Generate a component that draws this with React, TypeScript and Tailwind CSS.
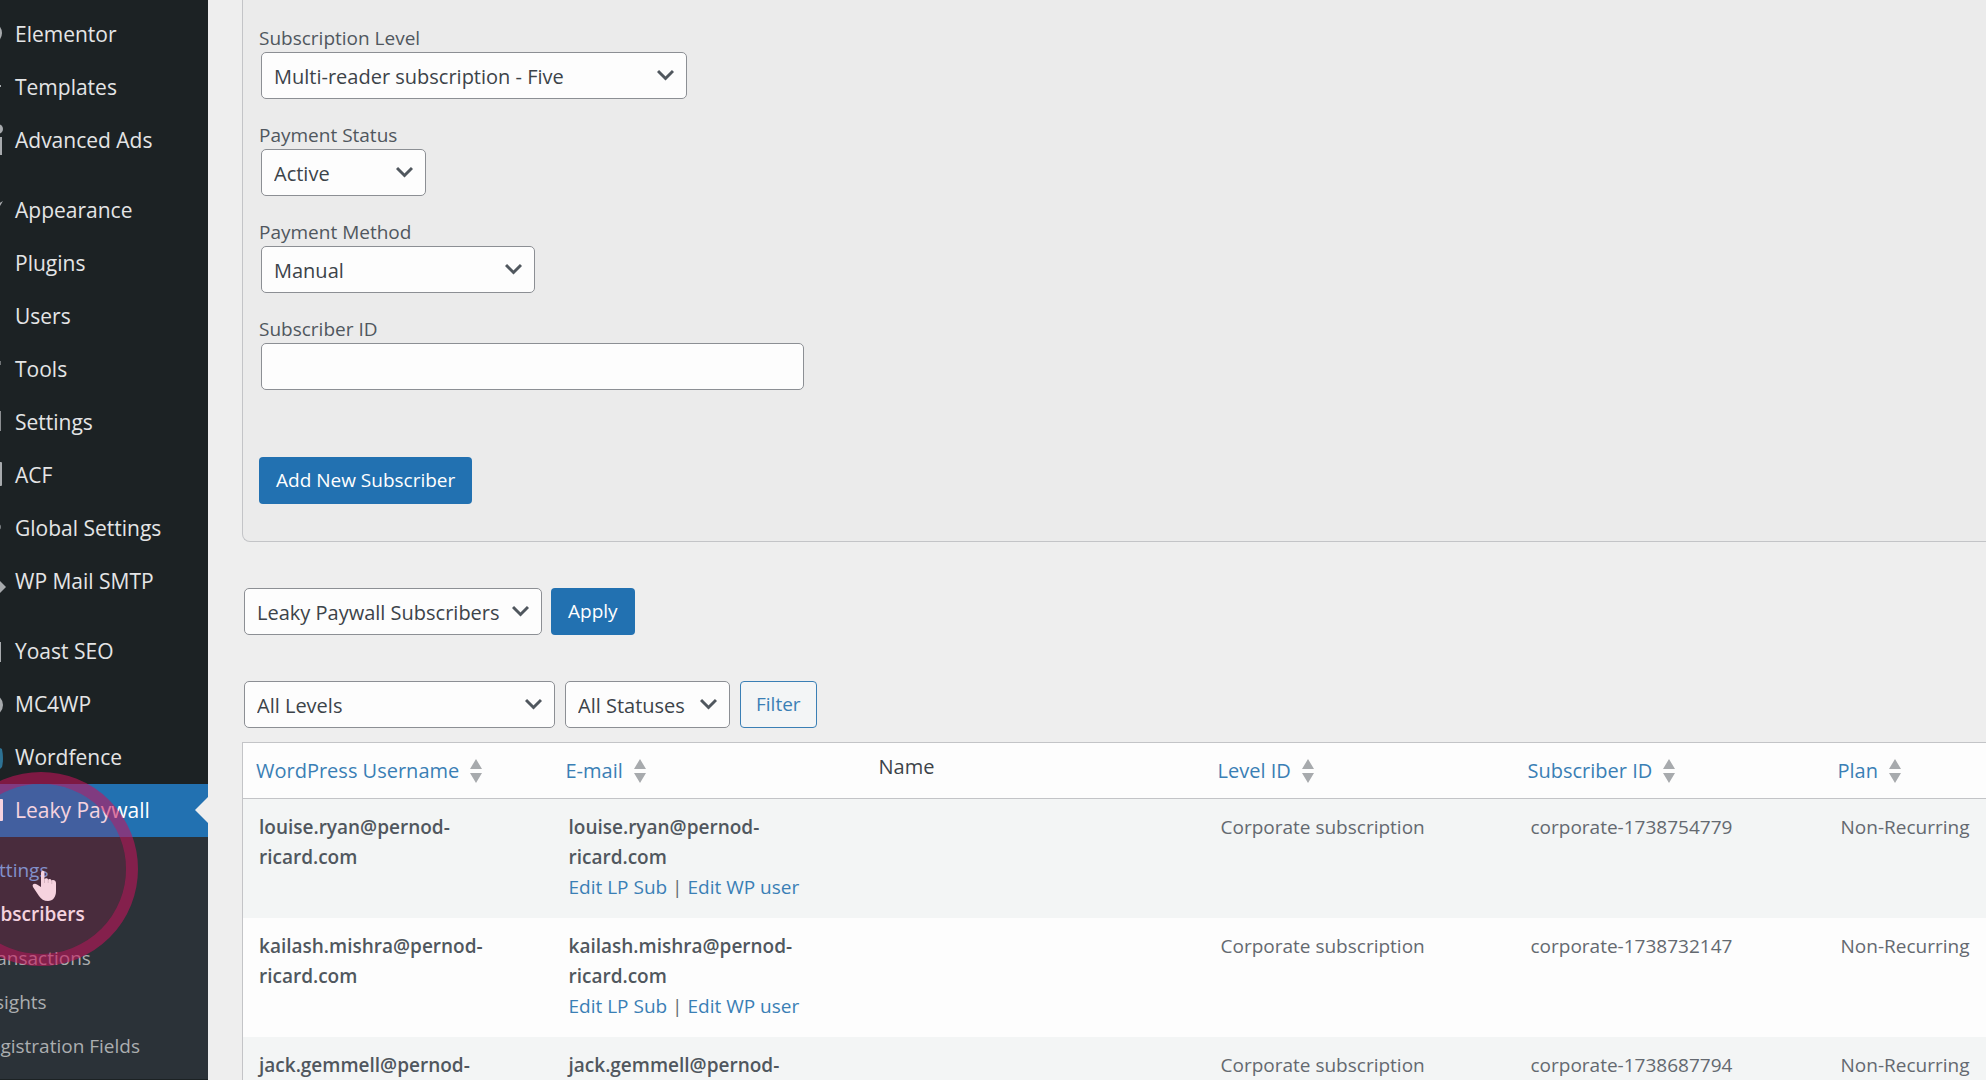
import type { ReactNode } from "react";

type MenuItem = {
  label: string;
  icon?: ReactNode;
  gapBefore?: boolean;
  current?: boolean;
};

const menu: MenuItem[] = [
  { label: "Elementor", icon: <circle cx="-9" cy="25" r="11" /> },
  { label: "Templates", icon: <rect x="-1" y="24" width="2" height="2" /> },
  {
    label: "Advanced Ads",
    icon: (
      <>
        <circle cx="-2" cy="15" r="5" />
        <rect x="-2" y="23" width="4" height="18" />
      </>
    ),
  },
  { label: "Appearance", icon: <path d="M-2 20 3 17 0 22z" />, gapBefore: true },
  { label: "Plugins" },
  { label: "Users" },
  { label: "Tools", icon: <rect x="-1" y="18" width="2" height="4" opacity="0.6" /> },
  { label: "Settings", icon: <rect x="-1" y="15" width="2" height="20" opacity="0.8" /> },
  { label: "ACF", icon: <rect x="-4" y="13" width="6" height="24" rx="1" /> },
  { label: "Global Settings", icon: <circle cx="-2" cy="25" r="3" opacity="0.7" /> },
  { label: "WP Mail SMTP", icon: <path d="M-4 32 0 26 6 32 0 38z" /> },
  { label: "Yoast SEO", icon: <rect x="-1" y="17" width="2" height="20" />, gapBefore: true },
  { label: "MC4WP", icon: <circle cx="-8" cy="27" r="11" /> },
  { label: "Wordfence", icon: <path fill="#2d7294" d="M0 17 2 18Q4 28 2 36L0 38z" /> },
  { label: "Leaky Paywall", icon: <rect x="-4" y="15" width="7" height="22" rx="1" fill="#fff" />, current: true },
];

const submenu = ["Settings", "Subscribers", "Transactions", "Insights", "Registration Fields"];

const rows = [
  { email: "louise.ryan@pernod-ricard.com", id: "corporate-1738754779" },
  { email: "kailash.mishra@pernod-ricard.com", id: "corporate-1738732147" },
  { email: "jack.gemmell@pernod-ricard.com", id: "corporate-1738687794" },
];

function Sidebar() {
  return (
    <nav className="relative w-[208px] shrink-0 bg-[#1c2224] pt-2">
      <ul>
        {menu.map((item) => (
          <li key={item.label} className={item.gapBefore ? "mt-[17px]" : ""}>
            <a
              href="#"
              className={
                item.current
                  ? "relative flex h-[53px] items-center bg-[#2271b1] text-[21px] text-white"
                  : "flex h-[53px] items-center text-[21px] text-[#e4e5e6]"
              }
            >
              <svg className="h-[53px] w-[15px] shrink-0" viewBox="0 0 15 53" fill="#a7aaad" aria-hidden="true">
                {item.icon}
              </svg>
              <span className="whitespace-nowrap">{item.label}</span>
              {item.current && (
                <svg className="absolute right-0 top-[13px] h-[26px] w-[13px]" viewBox="0 0 13 26" aria-hidden="true">
                  <path d="M13 0 0 13 13 26z" fill="#eeeeee" />
                </svg>
              )}
            </a>
          </li>
        ))}
      </ul>
      <ul className="overflow-hidden bg-[#2b3238] py-[11px]">
        {submenu.map((label) => (
          <li key={label} className="-ml-[22px]">
            <a
              href="#"
              className={
                label === "Subscribers"
                  ? "flex h-11 items-center whitespace-nowrap text-[19px] font-semibold text-white"
                  : label === "Settings"
                    ? "flex h-11 items-center whitespace-nowrap text-[19px] text-[#72aee6]"
                    : "flex h-11 items-center whitespace-nowrap text-[19px] text-[#abaeb0]"
              }
            >
              {label}
            </a>
          </li>
        ))}
      </ul>
      <Pointer />
    </nav>
  );
}

// Hand pointer with the round click highlight over it
function Pointer() {
  return (
    <svg
      className="pointer-events-none absolute left-0 top-[770px] h-[200px] w-[140px]"
      viewBox="0 0 140 200"
      aria-hidden="true"
    >
      <path
        fill="#fff"
        d="M41 103c0-3 3.500-3 3.500 0v6c1-1 3-1 3.700.5 1-1 3-.5 3.500 1 1.500-1 4.300 0 4.300 2.500v8c0 6-3 10-8 10-4 0-7-2-9-5l-6-9c-1.500-3 2-4 4-2.500l4 2.500z"
      />
      <path d="M44.500 108v5M48.200 109v4M51.800 110v4" stroke="#2b3238" strokeOpacity="0.3" strokeWidth="0.600" />
      <circle cx="41" cy="99" r="85" fill="#ce1457" fillOpacity="0.19" />
      <circle cx="41" cy="99" r="91" fill="none" stroke="#c8145c" strokeOpacity="0.57" strokeWidth="12" />
    </svg>
  );
}

function Select({ id, label, value, width }: { id: string; label?: string; value: string; width: string }) {
  return (
    <div className={`relative ${width}`}>
      <select
        id={id}
        aria-label={label}
        className="block h-[47px] w-full appearance-none rounded-[5px] border border-[#8c8f94] bg-[#fdfdfd] pl-3 pt-0.5 text-xl text-[#3c4349]"
      >
        <option>{value}</option>
      </select>
      <svg
        className="pointer-events-none absolute right-[13px] top-[17px] h-3 w-[17px]"
        viewBox="0 0 17 12"
        fill="none"
        stroke="#50575e"
        strokeWidth="3"
        aria-hidden="true"
      >
        <path d="M1 2 8.500 9.500 16 2" />
      </svg>
    </div>
  );
}

function Field({ id, label, children }: { id: string; label: string; children: ReactNode }) {
  return (
    <div className="mb-[23px]">
      <label htmlFor={id} className="block h-[27px] text-[19px] leading-[26px] text-[#50575e]">
        {label}
      </label>
      <div className="pl-[2px]">{children}</div>
    </div>
  );
}

function SortableHead({ label }: { label: string }) {
  return (
    <th scope="col" className="pl-[13px] text-left font-normal">
      <a href="#" className="flex items-center gap-[10px] whitespace-nowrap text-xl text-[#3a7fb5]">
        {label}
        <svg className="h-6 w-3.5" viewBox="0 0 14 24" fill="#a7aaad" aria-hidden="true">
          <path d="M7 0 13 10H1zM1 14h12l-6 10z" />
        </svg>
      </a>
    </th>
  );
}

function SubscribersTable() {
  return (
    <table className="w-full table-fixed border-collapse border-l border-t border-[#c3c4c7] bg-[#fdfdfd]">
      <colgroup>
        <col className="w-[310px]" />
        <col className="w-[310px]" />
        <col className="w-[342px]" />
        <col className="w-[310px]" />
        <col className="w-[310px]" />
        <col />
      </colgroup>
      <thead>
        <tr className="h-14 border-b border-[#c3c4c7]">
          <SortableHead label="WordPress Username" />
          <SortableHead label="E-mail" />
          <th scope="col" className="pb-2 pl-4 text-left text-xl font-normal text-[#3c4349]">
            Name
          </th>
          <SortableHead label="Level ID" />
          <SortableHead label="Subscriber ID" />
          <SortableHead label="Plan" />
        </tr>
      </thead>
      <tbody className="text-[19px] leading-[30px] text-[#646970]">
        {rows.map((row) => (
          <tr key={row.id} className="h-[119px] align-top odd:bg-[#f3f5f5]">
            <td className="pl-4 pt-[13px] font-semibold text-[#50575e]">
              <EmailText email={row.email} />
            </td>
            <td className="pl-4 pt-[13px]">
              <strong className="font-semibold text-[#50575e]">
                <EmailText email={row.email} />
              </strong>
              <div className="whitespace-nowrap">
                <a href="#" className="text-[#3a7fb5]">Edit LP Sub</a> |{" "}
                <a href="#" className="text-[#3a7fb5]">Edit WP user</a>
              </div>
            </td>
            <td />
            <td className="pl-4 pt-[13px]">Corporate subscription</td>
            <td className="pl-4 pt-[13px]">{row.id}</td>
            <td className="whitespace-nowrap pl-4 pt-[13px]">Non-Recurring</td>
          </tr>
        ))}
      </tbody>
    </table>
  );
}

function EmailText({ email }: { email: string }) {
  const cut = email.indexOf("-") + 1;
  return (
    <>
      {email.slice(0, cut)}
      <br />
      {email.slice(cut)}
    </>
  );
}

export default function App() {
  return (
    <div className="flex h-screen overflow-hidden bg-[#eeeeee] font-['Open_Sans','Noto_Sans',sans-serif]">
      <Sidebar />
      <main className="min-w-0 flex-1 pl-[34px]">
        <form className="rounded-bl-lg border-b border-l border-[#c3c4c7] bg-[#ebebeb] pb-[37px] pl-4 pt-[25px]">
          <Field id="level" label="Subscription Level">
            <Select id="level" value="Multi-reader subscription - Five" width="w-[426px]" />
          </Field>
          <Field id="status" label="Payment Status">
            <Select id="status" value="Active" width="w-[165px]" />
          </Field>
          <Field id="method" label="Payment Method">
            <Select id="method" value="Manual" width="w-[274px]" />
          </Field>
          <Field id="subscriber" label="Subscriber ID">
            <input
              id="subscriber"
              type="text"
              className="block h-[47px] w-[543px] rounded-[5px] border border-[#8c8f94] bg-[#fdfdfd] px-3 text-xl"
            />
          </Field>
          <button type="button" className="mt-11 h-[47px] rounded bg-[#2271b1] px-[17px] text-[19px] text-white">
            Add New Subscriber
          </button>
        </form>

        <div className="mt-[46px] flex gap-[9px] pl-[2px]">
          <Select id="list" label="Subscriber list" value="Leaky Paywall Subscribers" width="w-[298px]" />
          <button type="button" className="h-[47px] rounded bg-[#2271b1] px-[17px] text-[19px] text-white">
            Apply
          </button>
        </div>

        <div className="mb-[14px] mt-[46px] flex gap-[10px] pl-[2px]">
          <Select id="levels" label="Filter by level" value="All Levels" width="w-[311px]" />
          <Select id="statuses" label="Filter by status" value="All Statuses" width="w-[165px]" />
          <button
            type="button"
            className="h-[47px] rounded border border-[#3a7fb5] bg-[#f3f5f6] px-[15px] text-[19px] text-[#3a7fb5]"
          >
            Filter
          </button>
        </div>

        <SubscribersTable />
      </main>
    </div>
  );
}
